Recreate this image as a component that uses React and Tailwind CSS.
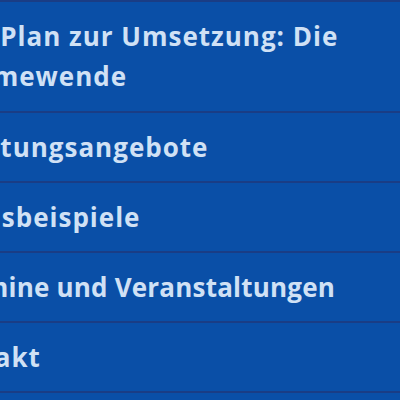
export default function App() {
  const rows = [
    { lines: [["Der Plan zur Umsetzung: Die", "-ml-[57px] tracking-[1px]"], ["Wärmewende", "-ml-[63px] tracking-[1px]"]] },
    { lines: [["Beratungsangebote", "-ml-[64px] tracking-[1px]"]] },
    { lines: [["Praxisbeispiele", "-ml-[70px] tracking-[1px]"]] },
    { lines: [["Termine und Veranstaltungen", "-ml-[60px] tracking-[0.2px]"]] },
    { lines: [["Kontakt", "-ml-[71px] tracking-[1px]"]] },
  ];
  return (
    <div
      className="w-[400px] h-[400px] overflow-hidden bg-[#0a4fa7] border-t-2 border-[#1a3d85]"
      style={{ fontFamily: '"Open Sans", "Noto Sans", sans-serif' }}
    >
      <ul className="flex flex-col">
        {rows.map((r, i) => (
          <li
            key={i}
            className={`border-b-2 border-[#1a3d85] ${i === 0 ? "pt-[14px] pb-[15px]" : "py-[14px]"}`}
          >
            <a className="block whitespace-nowrap text-[26px] leading-[40px] font-bold text-[#d0e1f5]">
              {r.lines.map(([l, m], j) => (
                <span key={j} className={`block ${m}`}>{l}</span>
              ))}
            </a>
          </li>
        ))}
      </ul>
    </div>
  );
}
